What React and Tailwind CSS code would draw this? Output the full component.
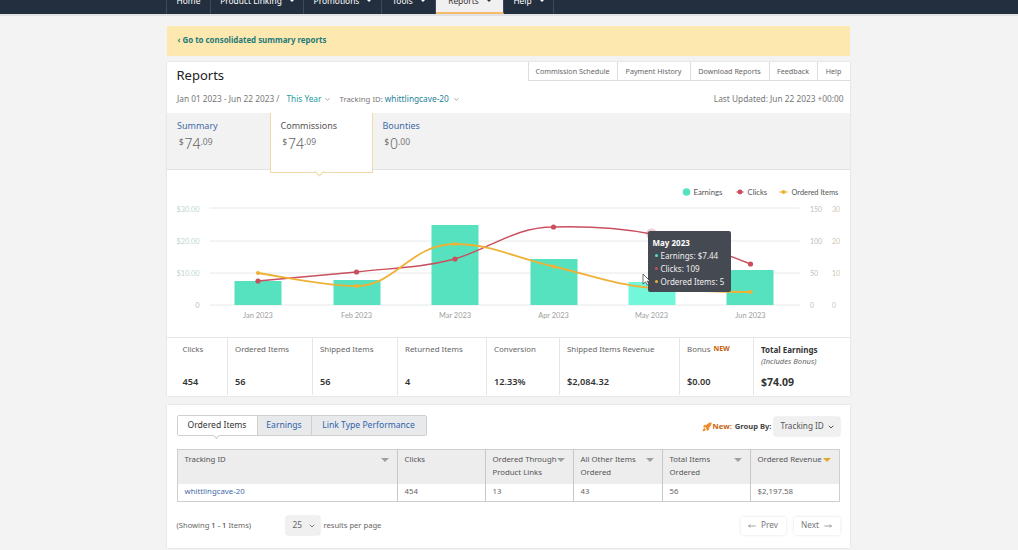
import React from "react";
import { ChevronDown, Rocket, MoveLeft, MoveRight } from "lucide-react";

const Caret = ({ color = "#9a9a9a", className = "" }) => (
  <svg width="8" height="4" viewBox="0 0 8 4" className={className}><path d="M0 0h8L4 4z" fill={color} /></svg>
);

const nav = [
  ["Home", 44, false],
  ["Product Linking", 93, true],
  ["Promotions", 78, true],
  ["Tools", 54, true],
  ["Reports", 68, true, true],
  ["Help", 50, true],
];

const Stat = ({ label, value, extra, className = "" }) => (
  <div className={`flex flex-col pt-[6px] border-r border-[#e6e6e6] last:border-r-0 ${className}`}>
    <div className="text-[7.9px] leading-[11px] text-[#666] whitespace-nowrap">{label}{extra}</div>
    <div className="mt-[21px] text-[9.2px] leading-[12px] font-semibold text-[#333]">{value}</div>
  </div>
);

const Th = ({ children, caret = "#a0a0a0" }) => (
  <th className="align-top border-r border-[#c8c8c8] last:border-r-0 pl-[7px] pr-[6px] pt-[3px] text-left font-normal">
    <div className="flex justify-between">
      <span className="whitespace-nowrap text-[7.8px] leading-[13px] text-[#555]">{children}</span>
      <Caret color={caret} className="mt-[5px] mr-[2px] shrink-0" />
    </div>
  </th>
);
const Td = ({ children, color = "text-[#666]" }) => (
  <td className={`border-r border-[#c8c8c8] last:border-r-0 pl-[7px] text-[7.8px] ${color}`}>{children}</td>
);

const Chart = () => {
  const bars = [[234, 281, "#57e2bf"], [333, 280, "#57e2bf"], [431, 225, "#57e2bf"], [530, 259, "#57e2bf"], [628, 282, "#72f7da"], [726, 270, "#57e2bf"]];
  const xs = [257.5, 356, 454.5, 553, 651, 750];
  const months = ["Jan 2023", "Feb 2023", "Mar 2023", "Apr 2023", "May 2023", "Jun 2023"];
  const red = [281, 272, 259, 227, 234, 264];
  const org = [273, 286, 244, 266.5, 288, 292];
  const font = { fontFamily: "Lato, sans-serif" };
  return (
    <svg width="683" height="167" viewBox="166.5 170 683 167" className="block" style={font}>
      {[208, 241, 273, 305].map((y) => <line key={y} x1="209" x2="799" y1={y} y2={y} stroke="#e6e8e8" strokeWidth="1" />)}
      {[["$30.00", 209.5], ["$20.00", 241.5], ["$10.00", 273.5]].map(([t, y]) => (
        <text key={t} x="199" y={y + 2.5} textAnchor="end" fontSize="7.3" fill="#c0d6d2">{t}</text>
      ))}
      <text x="199" y="308" textAnchor="end" fontSize="7.3" fill="#bbb">0</text>
      {[["150", 209.5], ["100", 241.5], ["50", 273.5], ["0", 305.5]].map(([t, y]) => (
        <text key={t} x="809.5" y={y + 2.5} fontSize="7" fill="#bdbdbd">{t}</text>
      ))}
      {[["30", 209.5], ["20", 241.5], ["10", 273.5], ["0", 305.5]].map(([t, y]) => (
        <text key={t} x="831.5" y={y + 2.5} fontSize="7" fill="#d2c6b6">{t}</text>
      ))}
      {bars.map(([x, y, c]) => <rect key={x} x={x} y={y} width="47" height={305 - y} fill={c} />)}
      {months.map((m, i) => <text key={m} x={xs[i]} y="318" textAnchor="middle" fontSize="7.4" fill="#a0a0a0">{m}</text>)}
      <circle cx="651" cy="234" r="5.5" fill="#c94f5e" opacity="0.28" />
      <path d="M257.5 281C290 278 323 275 356 272C390 268 420 268 454.5 259C490 248 515 227 553 227C590 226 620 228 651 234C690 241 720 252 750 264" fill="none" stroke="#c94f5e" strokeWidth="1.4" />
      <path d="M257.5 273C290 278 325 286 356 286C395 286 410 244 454.5 244C490 244 515 258 553 266.5C590 275 615 285 651 288C690 291 720 292 750 292" fill="none" stroke="#efb136" strokeWidth="1.8" />
      {xs.map((x, i) => <circle key={"r" + i} cx={x} cy={red[i]} r="2.6" fill="#c94f5e" />)}
      {xs.map((x, i) => <circle key={"o" + i} cx={x} cy={org[i]} r="2.1" fill="#efb136" />)}
      <circle cx="686" cy="192" r="3.8" fill="#57e2bf" />
      <text x="693" y="194.7" fontSize="7.7" fill="#555">Earnings</text>
      <line x1="736" x2="743" y1="192" y2="192" stroke="#c94f5e" strokeWidth="1.3" />
      <circle cx="739.5" cy="192" r="2.4" fill="#c94f5e" />
      <text x="747" y="194.7" fontSize="7.7" fill="#555">Clicks</text>
      <line x1="779" x2="787" y1="192" y2="192" stroke="#efb136" strokeWidth="1.3" />
      <circle cx="783" cy="192" r="1.9" fill="#efb136" />
      <text x="791" y="194.7" fontSize="7.4" fill="#555">Ordered Items</text>
    </svg>
  );
};

export default function App() {
  return (
    <div className="relative h-[550px] w-[1018px] overflow-hidden bg-[#f3f3f3]" style={{ fontFamily: '"Noto Sans", sans-serif' }}>
      <div className="box-border h-[16px] border-b-2 border-[#dfe1e3] bg-[#232f3e]">
        <div className="ml-[166px] flex h-[14px] overflow-hidden border-l border-[#3d4a5a]">
          {nav.map(([t, w, caret, active]) => (
            <div key={t} style={{ width: w }} className={`flex shrink-0 items-end justify-center gap-[8px] border-r border-[#3d4a5a] text-[8.4px] leading-[12px] ${active ? "border-b-2 border-b-[#f3bb6a] bg-[#f0f0f0] pb-[5px] text-[#333]" : "pb-[7px] text-white"}`}>
              <span>{t}</span>
              {caret && <span className="mb-[5px] inline-block h-0 w-0 border-x-[2.5px] border-t-[2.5px] border-x-transparent border-t-current" />}
            </div>
          ))}
        </div>
      </div>

      <div className="ml-[166.5px] w-[683px]">
        <div className="mt-[10px] flex h-[30px] items-center bg-[#fde8b0] pl-[11px] text-[7.9px] font-bold text-[#1f7a78]">‹ Go to consolidated summary reports</div>

        <div className="mt-[6px] h-[334px] bg-white shadow-[0_0_2px_rgba(0,0,0,0.12)]">
          <div className="relative h-[51px]">
            <div className="pl-[10px] pt-[4px] text-[13px] leading-[18px] text-[#222]">Reports</div>
            <div className="absolute right-0 top-0 flex h-[19px] border-b border-l border-[#ddd] text-[7.2px] text-[#666]">
              {[["Commission Schedule", 89], ["Payment History", 73], ["Download Reports", 79], ["Feedback", 48], ["Help", 32]].map(([t, w]) => (
                <div key={t} style={{ width: w }} className="flex items-center justify-center border-r border-[#ddd] last:border-r-0">{t}</div>
              ))}
            </div>
            <div className="absolute left-[10.5px] top-[31px] flex items-center text-[8.3px] leading-[12px] text-[#777]">
              <span>Jan 01 2023 - Jun 22 2023 /</span>
              <span className="ml-[7px] text-[#1f9aa0]">This Year</span>
              <ChevronDown size={7} className="ml-[3px] text-[#666]" />
              <span className="ml-[8px] text-[7.8px]">Tracking ID:</span>
              <span className="ml-[2px] text-[#1f7f9a]">whittlingcave-20</span>
              <ChevronDown size={7} className="ml-[4px] text-[#666]" />
            </div>
            <div className="absolute right-[6px] top-[31px] text-[8.3px] leading-[12px] text-[#777]">Last Updated: Jun 22 2023 +00:00</div>
          </div>

          <div className="relative flex h-[57px] border-b border-[#e2e2e2] bg-[#f2f2f2]">
            <div className="w-[103px] pl-[10.5px] pt-[7px]">
              <div className="text-[9px] leading-[12px] text-[#3e6aa8]">Summary</div>
              <Amount v="74" c="09" />
            </div>
            <div className="relative z-10 h-[60px] w-[103px] border-x border-b border-[#f0d9a8] bg-white pl-[10px] pt-[7px]">
              <div className="text-[9px] leading-[12px] text-[#555]">Commissions</div>
              <Amount v="74" c="09" />
              <span className="absolute left-[45px] top-[55px] h-[7px] w-[7px] rotate-45 border-b border-r border-[#f0d9a8] bg-white" />
            </div>
            <div className="pl-[10px] pt-[7px]">
              <div className="text-[9px] leading-[12px] text-[#3e6aa8]">Bounties</div>
              <Amount v="0" c="00" />
            </div>
          </div>

          <div className="relative h-[167px]">
            <Chart />
            <div className="absolute left-[481px] top-[61px] h-[61px] w-[83px] rounded-[2px] bg-[#454952] pl-[5px] pt-[5px] text-[8px] leading-[13px] text-[#f0f0f0]">
              <div className="font-bold text-white">May 2023</div>
              {[["#57e2bf", "Earnings: $7.44"], ["#c94f5e", "Clicks: 109"], ["#efb136", "Ordered Items: 5"]].map(([c, t]) => (
                <div key={t} className="ml-[2px] flex items-center whitespace-nowrap">
                  <span className="mr-[3px] h-[3px] w-[3px] rounded-full" style={{ background: c }} />
                  {t}
                </div>
              ))}
            </div>
            <svg width="9" height="13" viewBox="0 0 9 13" className="absolute left-[475px] top-[103px]">
              <path d="M1 1v10l2.5-2.2L5.2 12l1.6-.7-1.6-3.1H8.2z" fill="#fff" stroke="#333" strokeWidth="0.7" />
            </svg>
          </div>

          <div className="grid h-[58px] grid-cols-[61.5px_85px_85px_89px_73px_120px_74px_1fr] border-t border-[#e6e6e6]">
            <Stat label="Clicks" value="454" className="pl-[16px]" />
            <Stat label="Ordered Items" value="56" className="pl-[7px]" />
            <Stat label="Shipped Items" value="56" className="pl-[7px]" />
            <Stat label="Returned Items" value="4" className="pl-[7px]" />
            <Stat label="Conversion" value="12.33%" className="pl-[7px]" />
            <Stat label="Shipped Items Revenue" value="$2,084.32" className="pl-[7px]" />
            <Stat label="Bonus " value="$0.00" className="pl-[7px]" extra={<span className="relative -top-[1px] ml-[1px] text-[7px] font-bold text-[#c8610c]">NEW</span>} />
            <div className="pl-[7px] pt-[6px]">
              <div className="text-[8px] leading-[11px] font-bold text-[#333]">Total Earnings</div>
              <div className="text-[7.6px] leading-[12px] italic text-[#666]">(Includes Bonus)</div>
              <div className="mt-[8px] text-[10.5px] leading-[14px] font-bold text-[#333]">$74.09</div>
            </div>
          </div>
        </div>

        <div className="mt-[9px] h-[143px] bg-white px-[10px] pt-[10px] shadow-[0_0_2px_rgba(0,0,0,0.12)]">
          <div className="flex items-start justify-between">
            <div className="flex h-[21px] rounded-[2px] border border-[#cfcfcf] text-[8.6px]">
              <div className="relative flex w-[79px] items-center justify-center bg-white text-[#333]">Ordered Items
                <span className="absolute left-[36px] top-[17px] h-[5px] w-[5px] rotate-45 border-b border-r border-[#cfcfcf] bg-white" />
              </div>
              <div className="flex w-[54px] items-center justify-center border-l border-[#cfcfcf] bg-[#e8e9eb] text-[#2f62ad]">Earnings</div>
              <div className="flex w-[115px] items-center justify-center border-l border-[#cfcfcf] bg-[#e8e9eb] text-[#2f62ad]">Link Type Performance</div>
            </div>
            <div className="mt-[2px] flex items-center text-[7.6px]">
              <Rocket size={10} className="mr-[1px] fill-[#ee8a2c] text-[#ee8a2c]" />
              <span className="font-bold text-[#c8610c]">New:</span>
              <span className="ml-[3px] font-bold text-[#444]">Group By:</span>
              <div className="ml-[2px] flex h-[19px] w-[66px] items-center justify-between rounded-[3px] bg-[#f0f0f0] pl-[7px] pr-[5px] text-[8.2px] text-[#555] shadow-[0_0_2px_rgba(0,0,0,0.2)]">
                Tracking ID <ChevronDown size={8} strokeWidth={3} />
              </div>
            </div>
          </div>

          <table className="mt-[13px] w-[662px] table-fixed border-collapse border border-[#cfcfcf]">
            <colgroup>
              <col className="w-[220px]" /><col className="w-[88px]" /><col className="w-[88px]" /><col className="w-[89px]" /><col className="w-[88px]" /><col className="w-[89px]" />
            </colgroup>
            <thead>
              <tr className="h-[34px] bg-[#ededee]">
                <Th>Tracking ID</Th>
                <th className="align-top border-r border-[#c8c8c8] pl-[7px] pt-[3px] text-left text-[7.8px] leading-[13px] font-normal text-[#555]">Clicks</th>
                <Th>Ordered Through<br />Product Links</Th>
                <Th>All Other Items<br />Ordered</Th>
                <Th>Total Items<br />Ordered</Th>
                <Th caret="#e0a92e">Ordered Revenue</Th>
              </tr>
            </thead>
            <tbody>
              <tr className="h-[18px]">
                <Td color="text-[#3e6aa8]">whittlingcave-20</Td>
                <Td>454</Td>
                <Td>13</Td>
                <Td>43</Td>
                <Td>56</Td>
                <Td>$2,197.58</Td>
              </tr>
            </tbody>
          </table>

          <div className="mt-[14px] flex h-[19px] items-center text-[7.6px] text-[#666]">
            <span className="w-[109px]">(Showing <span className="text-[#333]">1 - 1</span> Items)</span>
            <div className="flex h-[19px] w-[34px] items-center justify-between rounded-[3px] bg-[#f0f0f0] pl-[7px] pr-[4px] text-[8.4px] shadow-[0_0_2px_rgba(0,0,0,0.2)]">
              25 <ChevronDown size={8} strokeWidth={2.5} />
            </div>
            <span className="ml-[4px]">results per page</span>
            <div className="ml-auto flex items-center gap-[8px] text-[8.2px] text-[#777]">
              <div className="flex h-[18px] w-[45px] items-center justify-center gap-[5px] rounded-[2px] bg-white shadow-[0_0_3px_rgba(0,0,0,0.12)]"><MoveLeft size={8} />Prev</div>
              <div className="flex h-[18px] w-[46px] items-center justify-center gap-[5px] rounded-[2px] bg-white shadow-[0_0_3px_rgba(0,0,0,0.12)]">Next<MoveRight size={8} /></div>
            </div>
          </div>
        </div>
      </div>
    </div>
  );
}

function Amount({ v, c }) {
  return (
    <div className="ml-[2px] mt-[4px] flex items-start text-[#666]">
      <span className="mt-[1px] text-[8px] leading-[9px]">$</span>
      <span className="ml-[1px] text-[14px] font-light leading-[16px]">{v}</span>
      <span className="mt-[1px] text-[8.5px] leading-[9px] text-[#777]">.{c}</span>
    </div>
  );
}
